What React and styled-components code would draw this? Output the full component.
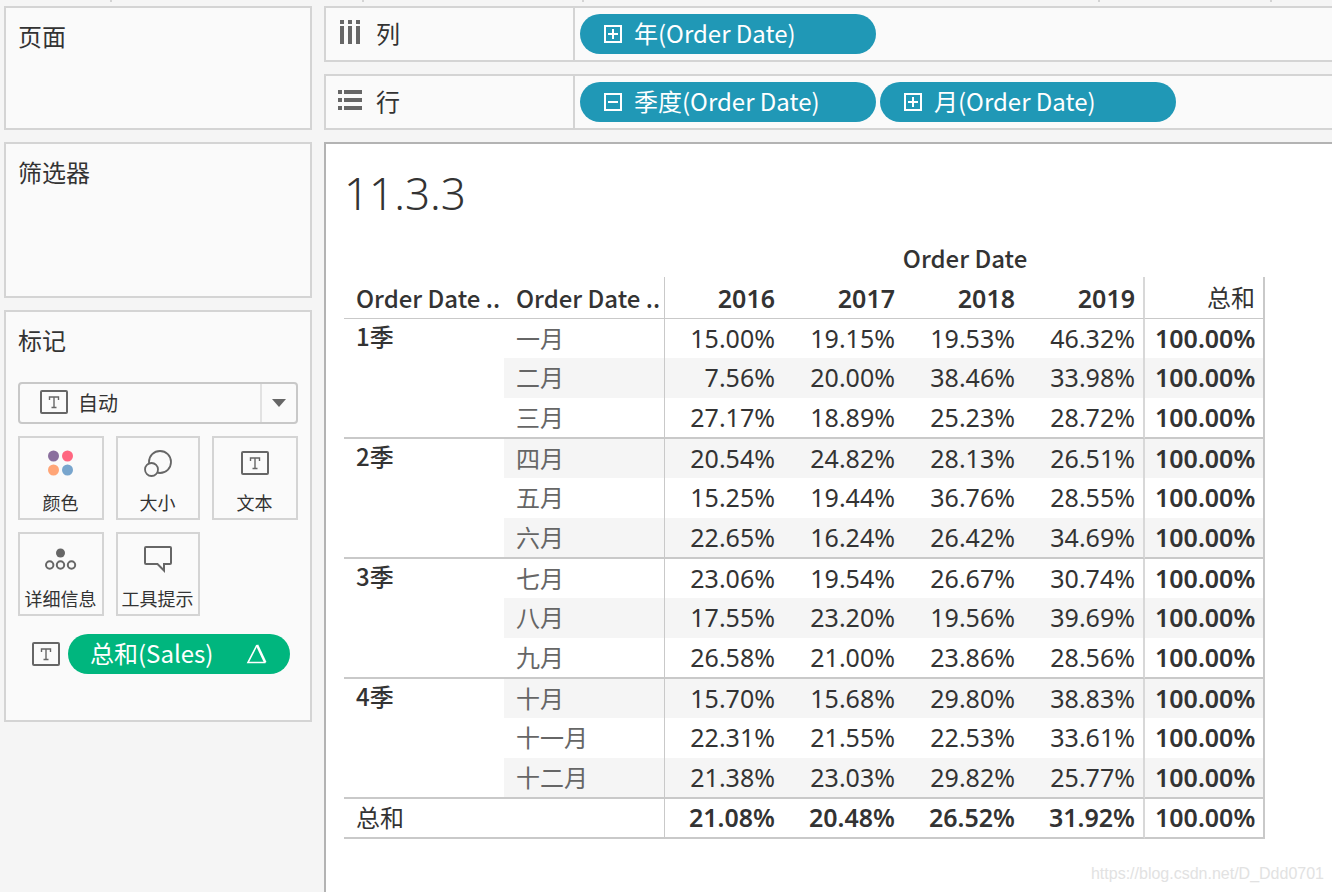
import React from "react";
import styled, { createGlobalStyle, css } from "styled-components";

const latin = `"Noto Sans", "Noto Sans CJK SC", sans-serif`;
const cjk = `"Noto Sans CJK SC", "Noto Sans", sans-serif`;

const GlobalStyle = createGlobalStyle`
  * { box-sizing: border-box; }
  body { margin: 0; background: #f5f5f5; color: #333; font-family: ${cjk}; font-size: 24px; }
  button, select { font: inherit; color: inherit; margin: 0; }
  svg { display: block; flex: none; }
`;

const Page = styled.div`
  position: relative;
  display: flex;
  flex-direction: column;
  min-height: 100vh;
  overflow: hidden;
`;

const Ruler = styled.div`
  display: grid;
  grid-template-columns: 110px 252px 220px 516px 172px 1fr;
  height: 2px;
  margin-bottom: 4px;
`;

const RulerCell = styled.span`
  border-right: 2px solid #d4d4d4;
  margin-right: -2px;
  &:last-child { border: 0; margin: 0; }
`;

const Body = styled.div`
  display: flex;
  flex: 1;
  gap: 12px;
  padding-left: 4px;
`;

const Sidebar = styled.aside`
  display: flex;
  flex-direction: column;
  gap: 12px;
  flex: 0 0 308px;
`;

const Panel = styled.section`
  min-height: ${(p) => p.$min}px;
  padding: 12px;
  border: 2px solid #d4d4d4;
  background: #fafafa;
`;

const PanelTitle = styled.h2`
  margin: 0;
  padding-bottom: 4px;
  font-size: 24px;
  font-weight: 400;
  line-height: 32px;
`;

const MarkType = styled.label`
  display: flex;
  align-items: center;
  position: relative;
  height: 42px;
  margin: 22px 0 12px;
  border: 2px solid #c8c8c8;
  border-radius: 4px;
`;

const MarkSelect = styled.select`
  flex: 1;
  height: 38px;
  padding: 0 0 2px 58px;
  border: 0;
  background: transparent;
  appearance: none;
  font-size: 20px;
`;

const SelectIcon = styled.span`
  position: absolute;
  left: 20px;
  top: 6px;
  pointer-events: none;
`;

const SelectArrow = styled.span`
  position: absolute;
  right: 0;
  top: 0;
  display: grid;
  place-items: center;
  width: 36px;
  height: 38px;
  border-left: 2px solid #e2e2e2;
  pointer-events: none;
`;

const MarkGrid = styled.div`
  display: grid;
  grid-template-columns: 86fr 84fr 86fr;
  gap: 12px;
`;

const MarkButton = styled.button`
  display: flex;
  flex-direction: column;
  align-items: center;
  justify-content: space-between;
  height: 84px;
  padding: 10px 1px 3px 0;
  border: 2px solid #d4d4d4;
  background: #fafafa;
  font-size: 18px;
  line-height: 26px;
  white-space: nowrap;
`;

const MarkGlyph = styled.span`
  display: grid;
  place-items: center;
  height: 30px;
`;

const MarkRow = styled.div`
  display: flex;
  align-items: center;
  gap: 8px;
  margin-top: 18px;
  padding: 0 8px 0 14px;
`;

const Pill = styled.button`
  display: flex;
  align-items: center;
  gap: 12px;
  height: 40px;
  padding: 0 22px 2px;
  border: 0;
  border-radius: 20px;
  background: ${(p) => (p.$measure ? "#00b67e" : "#2098b6")};
  color: #fff;
  line-height: 36px;
  white-space: nowrap;
  ${(p) =>
    p.$measure
      ? css`flex: 1; justify-content: space-between;`
      : css`flex: 0 0 296px;`}
`;

const Main = styled.main`
  display: flex;
  flex-direction: column;
  flex: 1;
  gap: 12px;
  min-width: 0;
`;

const Shelf = styled.section`
  display: flex;
  height: 56px;
  border: 2px solid #d4d4d4;
  border-right: 0;
  background: #fafafa;
`;

const ShelfLabel = styled.h2`
  display: flex;
  align-items: center;
  gap: 14px;
  flex: 0 0 249px;
  margin: 0;
  padding: 0 0 2px 12px;
  border-right: 2px solid #d4d4d4;
  font-size: 24px;
  font-weight: 400;
  line-height: 36px;
`;

const ShelfPills = styled.div`
  display: flex;
  align-items: center;
  gap: 4px;
  padding-left: 5px;
`;

const View = styled.section`
  flex: 1;
  padding: 20px 18px 52px;
  border: solid #b3b3b3;
  border-width: 2px 0 0 2px;
  background: #fff;
`;

const Title = styled.h1`
  margin: 0 0 18px;
  font: 300 44px/58px ${latin};
`;

const Crosstab = styled.table`
  table-layout: fixed;
  width: 921px;
  border-collapse: separate;
  border-spacing: 0;
  font-family: ${latin};
  font-size: 25px;
  line-height: 36px;
`;

const Col = styled.col`
  width: ${(p) => p.$w}px;
`;

const Row = styled.tr`
  height: ${(p) => p.$h || 40}px;
`;

const cell = css`
  padding: 0 10px 2px;
  text-align: right;
  vertical-align: middle;
  white-space: nowrap;
  border: 0 solid #c9c9c9;
  border-bottom-width: ${(p) => p.$line || 0}px;
  ${(p) => p.$edge && css`padding-right: 8px; border-right-width: 2px;`}
  ${(p) => p.$edge && css`&:not(:last-child) { border-right-color: #d8d8d8; }`}
  ${(p) => p.$band && css`background: #f5f5f5;`}
`;

const Value = styled.td`
  ${cell}
  font-weight: ${(p) => (p.$bold ? 600 : 400)};
`;

const ColHead = styled.th`
  ${cell}
  padding-bottom: ${(p) => (p.$plain ? 2 : 0)}px;
  font-weight: ${(p) => (p.$plain ? 400 : 600)};
  font-family: ${(p) => (p.$plain ? cjk : latin)};
  font-size: ${(p) => (p.$plain ? 24 : 25)}px;
`;

const FieldHead = styled.th`
  ${cell}
  padding: ${(p) => (p.$center ? "0 0 2px" : "0 0 0 12px")};
  text-align: ${(p) => (p.$center ? "center" : "left")};
  font: 500 24px/34px ${cjk};
  ${(p) => p.$divide && css`border-right-width: 1px;`}
`;

const RowHead = styled.th`
  ${cell}
  padding: 0 0 2px 12px;
  text-align: left;
  vertical-align: ${(p) => (p.$top ? "top" : "middle")};
  font: ${(p) => (p.$top ? 500 : 400)} 24px/${(p) => (p.$top ? 34 : 36)}px ${cjk};
  color: ${(p) => (p.$muted ? "#666" : "#333")};
  ${(p) => p.$divide && css`border-right-width: 1px;`}
`;

const Watermark = styled.div`
  position: absolute;
  right: 8px;
  bottom: 8px;
  font: 16px/20px "Liberation Sans", Arial, sans-serif;
  color: #e2e2e2;
`;

const TextIcon = () => (
  <svg width="28" height="24" viewBox="0 0 28 24" fill="none" stroke="#666" strokeWidth="2">
    <rect x="1" y="1" width="26" height="22" rx="1" />
    <path d="M9.500 10V7h9v3M14 7v10.500M11.500 17.500h5" strokeWidth="1.400" />
  </svg>
);

const ColorIcon = () => (
  <svg width="28" height="28" viewBox="0 0 28 28">
    <circle cx="6.500" cy="7" r="5.500" fill="#8a6f9e" />
    <circle cx="20.500" cy="7" r="5.500" fill="#ff6680" />
    <circle cx="6.500" cy="21" r="5.500" fill="#ffa577" />
    <circle cx="20.500" cy="21" r="5.500" fill="#78a5cd" />
  </svg>
);

const SizeIcon = () => (
  <svg width="30" height="28" viewBox="0 0 30 28" stroke="#666" strokeWidth="1.800" fill="#fafafa">
    <circle cx="17" cy="13" r="11" />
    <circle cx="8.500" cy="20.500" r="6.500" />
  </svg>
);

const DetailIcon = () => (
  <svg width="32" height="28" viewBox="0 0 32 28" fill="none" stroke="#666" strokeWidth="2">
    <circle cx="15.500" cy="8" r="4.500" fill="#666" stroke="none" />
    <circle cx="4.700" cy="20" r="3.700" />
    <circle cx="15.500" cy="20" r="3.700" />
    <circle cx="26.500" cy="20" r="3.700" />
  </svg>
);

const TooltipIcon = () => (
  <svg width="30" height="28" viewBox="0 0 30 28" fill="none" stroke="#666" strokeWidth="2">
    <path d="M3 2h24a1 1 0 0 1 1 1v15a1 1 0 0 1-1 1h-6v6.500l-6.500-6.500H3a1 1 0 0 1-1-1V3a1 1 0 0 1 1-1z" />
  </svg>
);

const ColumnsIcon = () => (
  <svg width="24" height="26" viewBox="0 0 24 26" fill="#666">
    {[2, 10, 18].map((x) => (
      <path key={x} d={`M${x} 0h4v4h-4zM${x} 6h4v18h-4z`} />
    ))}
  </svg>
);

const RowsIcon = () => (
  <svg width="24" height="24" viewBox="0 0 24 24" fill="#666">
    {[1, 9, 17].map((y) => (
      <path key={y} d={`M0 ${y}h4v4h-4zM6 ${y}h18v4h-18z`} />
    ))}
  </svg>
);

const ExpandIcon = ({ open }) => (
  <svg width="20" height="20" viewBox="0 0 20 20" fill="none" stroke="#fff" strokeWidth="2">
    <rect x="3" y="3" width="16" height="16" />
    <path d={open ? "M6 11h10" : "M6 11h10M11 6v10"} />
  </svg>
);

const DeltaIcon = () => (
  <svg width="22" height="22" viewBox="0 0 22 22" fill="none" stroke="#fff">
    <path d="M11 3L2 20.500h17.500" strokeWidth="1.600" />
    <path d="M11 3l8.300 17.500" strokeWidth="2.600" />
  </svg>
);

const ArrowIcon = () => (
  <svg width="14" height="8" viewBox="0 0 14 8">
    <path d="M0 0h14L7 8z" fill="#666" />
  </svg>
);

const marks = [
  ["颜色", ColorIcon],
  ["大小", SizeIcon],
  ["文本", TextIcon],
  ["详细信息", DetailIcon],
  ["工具提示", TooltipIcon],
];

const shelves = [
  { name: "列", Icon: ColumnsIcon, pills: [["年(Order Date)", false]] },
  { name: "行", Icon: RowsIcon, pills: [["季度(Order Date)", true], ["月(Order Date)", false]] },
];

const quarters = [
  ["1季", [
    ["一月", "15.00%", "19.15%", "19.53%", "46.32%"],
    ["二月", "7.56%", "20.00%", "38.46%", "33.98%"],
    ["三月", "27.17%", "18.89%", "25.23%", "28.72%"],
  ]],
  ["2季", [
    ["四月", "20.54%", "24.82%", "28.13%", "26.51%"],
    ["五月", "15.25%", "19.44%", "36.76%", "28.55%"],
    ["六月", "22.65%", "16.24%", "26.42%", "34.69%"],
  ]],
  ["3季", [
    ["七月", "23.06%", "19.54%", "26.67%", "30.74%"],
    ["八月", "17.55%", "23.20%", "19.56%", "39.69%"],
    ["九月", "26.58%", "21.00%", "23.86%", "28.56%"],
  ]],
  ["4季", [
    ["十月", "15.70%", "15.68%", "29.80%", "38.83%"],
    ["十一月", "22.31%", "21.55%", "22.53%", "33.61%"],
    ["十二月", "21.38%", "23.03%", "29.82%", "25.77%"],
  ]],
];

const rowHeights = [39, 40, 41];
const years = ["2016", "2017", "2018", "2019"];
const totals = ["21.08%", "20.48%", "26.52%", "31.92%"];

export default function App() {
  return (
    <Page>
      <GlobalStyle />
      <Ruler>
        {[0, 1, 2, 3, 4, 5].map((i) => <RulerCell key={i} />)}
      </Ruler>
      <Body>
        <Sidebar>
          <Panel $min={124}><PanelTitle>页面</PanelTitle></Panel>
          <Panel $min={156}><PanelTitle>筛选器</PanelTitle></Panel>
          <Panel $min={412}>
            <PanelTitle>标记</PanelTitle>
            <MarkType>
              <SelectIcon><TextIcon /></SelectIcon>
              <MarkSelect aria-label="标记"><option>自动</option></MarkSelect>
              <SelectArrow><ArrowIcon /></SelectArrow>
            </MarkType>
            <MarkGrid>
              {marks.map(([name, Icon]) => (
                <MarkButton key={name} type="button">
                  <MarkGlyph><Icon /></MarkGlyph>
                  {name}
                </MarkButton>
              ))}
            </MarkGrid>
            <MarkRow>
              <TextIcon />
              <Pill type="button" $measure>总和(Sales)<DeltaIcon /></Pill>
            </MarkRow>
          </Panel>
        </Sidebar>
        <Main>
          {shelves.map(({ name, Icon, pills }) => (
            <Shelf key={name}>
              <ShelfLabel><Icon />{name}</ShelfLabel>
              <ShelfPills>
                {pills.map(([text, open]) => (
                  <Pill key={text} type="button"><ExpandIcon open={open} />{text}</Pill>
                ))}
              </ShelfPills>
            </Shelf>
          ))}
          <View>
            <Title>11.3.3</Title>
            <Crosstab>
              <colgroup>
                <Col $w={160} /><Col $w={161} />
                <Col $w={120} /><Col $w={120} /><Col $w={120} /><Col $w={120} /><Col $w={120} />
              </colgroup>
              <thead>
                <Row $h={37}>
                  <td colSpan={2} />
                  <FieldHead colSpan={5} $center>Order Date</FieldHead>
                </Row>
                <Row $h={42}>
                  <FieldHead $line={1}>Order Date ..</FieldHead>
                  <FieldHead $line={1} $divide>Order Date ..</FieldHead>
                  {years.map((y, i) => <ColHead key={y} $line={1} $edge={i === 3}>{y}</ColHead>)}
                  <ColHead $line={1} $edge $plain>总和</ColHead>
                </Row>
              </thead>
              <tbody>
                {quarters.map(([quarter, months], q) =>
                  months.map(([month, ...values], m) => {
                    const band = (q * 3 + m) % 2 === 1;
                    const line = m === 2 ? 2 : 0;
                    return (
                      <Row key={month} $h={rowHeights[m]}>
                        {m === 0 && <RowHead rowSpan={3} $top $line={2}>{quarter}</RowHead>}
                        <RowHead $muted $divide $band={band} $line={line}>{month}</RowHead>
                        {values.map((v, i) => (
                          <Value key={i} $band={band} $line={line} $edge={i === 3}>{v}</Value>
                        ))}
                        <Value $band={band} $line={line} $edge $bold>100.00%</Value>
                      </Row>
                    );
                  })
                )}
                <Row>
                  <RowHead colSpan={2} $line={2} $divide>总和</RowHead>
                  {totals.map((v, i) => <Value key={i} $line={2} $edge={i === 3} $bold>{v}</Value>)}
                  <Value $line={2} $edge $bold>100.00%</Value>
                </Row>
              </tbody>
            </Crosstab>
          </View>
        </Main>
      </Body>
      <Watermark>https://blog.csdn.net/D_Ddd0701</Watermark>
    </Page>
  );
}
